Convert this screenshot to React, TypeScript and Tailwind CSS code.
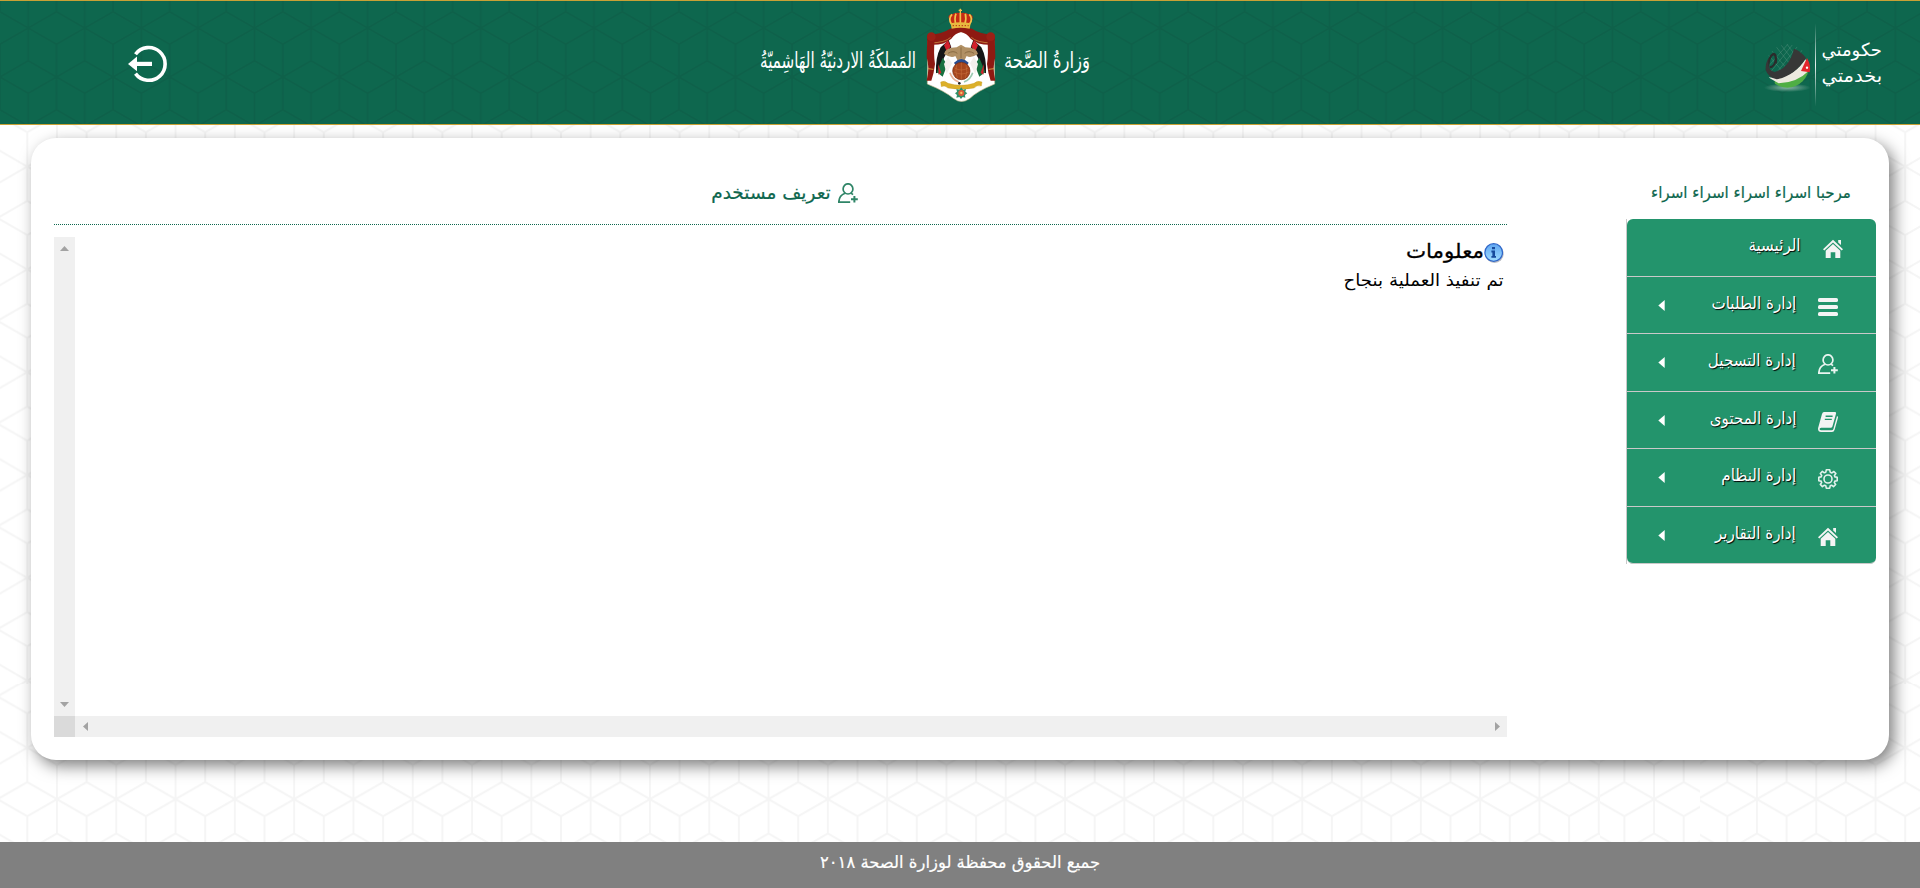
import React from 'react';

const F = "font-['DejaVu_Sans',sans-serif]";

function Hex({ id, w, h, x, y, stroke, sw }: { id: string; w: number; h: number; x: number; y: number; stroke: string; sw: number }) {
  const e = h / 3;
  const c = w / 2;
  const d = [
    `M${c} ${h / 2 - e}V${h / 2 + e}`,
    `M0 ${h / 2 - e / 2}L${c} ${h / 2}L${w} ${h / 2 - e / 2}`,
    `M0 ${h / 2 + e / 2}L${c} ${h / 2}L${w} ${h / 2 + e / 2}`,
    `M0 0V${e}M${w} 0V${e}M0 ${h}V${h - e}M${w} ${h}V${h - e}`,
    `M0 0L${c} ${e / 2}L${w} 0M0 ${h}L${c} ${h - e / 2}L${w} ${h}`,
  ].join('');
  return (
    <pattern id={id} width={w} height={h} x={x - c} y={y - h / 2} patternUnits="userSpaceOnUse">
      <path d={d} fill="none" stroke={stroke} strokeWidth={sw} />
    </pattern>
  );
}

function PageTile({ x, y }: { x: number; y: number }) {
  return (
    <svg x={x} y={y} width="1700" height="684" viewBox="0 0 1700 684">
      <rect width="1600" height="684" fill="url(#pageA)" />
      <rect x="1600" width="100" height="684" fill="url(#pageB)" />
    </svg>
  );
}

function PageBackdrop() {
  return (
    <svg className="absolute inset-0 -z-10" width="1920" height="888">
      <defs>
        <Hex id="pageA" w={59.3} h={102.8} x={27.3} y={63.8} stroke="#f5f5f5" sw={2} />
        <Hex id="pageB" w={59.3} h={102.8} x={23.3} y={63.8} stroke="#f5f5f5" sw={2} />
      </defs>
      <PageTile x={0} y={0} />
      <PageTile x={1700} y={0} />
      <PageTile x={0} y={684} />
      <PageTile x={1700} y={684} />
    </svg>
  );
}

function Emblem() {
  return (
    <svg className="h-[102px] w-[82px]" viewBox="0 0 246 306">
      <path d="M24 110L92 84H156L222 110L224 240Q170 262 150 283Q124 302 100 283Q76 262 22 240Z" fill="#fff" stroke="#cdbf94" strokeWidth="2" />
      <path d="M90 74Q123 62 156 74Q178 90 224 92L222 122Q176 126 152 104Q140 88 123 84Q106 88 94 104Q70 126 24 122L22 92Q68 90 90 74Z" fill="#8e1a12" />
      <path d="M92 100Q76 116 30 117M154 100Q170 116 216 117" stroke="#d8a04a" strokeWidth="2" fill="none" />
      <path d="M22 96L44 104Q40 150 45 180Q42 208 34 230L20 230Q30 190 20 160Z" fill="#8e1a12" />
      <path d="M224 96L202 104Q206 150 201 180Q204 208 212 230L226 230Q216 190 226 160Z" fill="#8e1a12" />
      <path d="M24 194L40 196M206 196L222 194" stroke="#d2a046" strokeWidth="3" />
      <circle cx="34" cy="98" r="13" fill="#9c2016" />
      <circle cx="212" cy="98" r="13" fill="#9c2016" />
      <path d="M86 108L62 130Q46 160 48 208L68 200Q62 160 94 130Z" fill="#161616" />
      <path d="M160 108L184 130Q200 160 198 208L178 200Q184 160 152 130Z" fill="#161616" />
      <path d="M84 108L72 124L80 142L92 128ZM162 108L174 124L166 142L154 128Z" fill="#d3202c" />
      <path d="M68 162L50 204L68 218L82 182ZM178 162L196 204L178 218L164 182Z" fill="#17713f" />
      <path d="M84 158L72 180L80 210L96 178ZM162 158L174 180L166 210L150 178Z" fill="#f3f0ec" />
      <path d="M54 180L64 206L56 212ZM192 180L182 206L190 212Z" fill="#d3202c" />
      <path d="M72 150Q76 130 110 130L123 122L136 130Q170 130 174 150Q152 164 140 156L132 172H114L106 156Q94 164 72 150Z" fill="#b19064" />
      <path d="M84 148Q100 138 112 148M162 148Q146 138 134 148M123 130V162" stroke="#8a6c42" strokeWidth="3" fill="none" />
      <path d="M102 176Q124 154 146 176L140 186H108Z" fill="#2a4c8f" />
      <circle cx="124" cy="201" r="26" fill="#a6461d" stroke="#7c2f12" strokeWidth="2" />
      <path d="M104 192Q124 204 144 192M102 204Q124 216 146 204M124 176V226M110 182Q104 202 112 222M138 182Q144 202 136 222" stroke="#cc7440" strokeWidth="1.5" fill="none" />
      <path d="M90 206Q96 226 116 234" stroke="#e8b094" strokeWidth="5" fill="none" />
      <path d="M158 206Q152 226 132 234" stroke="#9ccab2" strokeWidth="5" fill="none" />
      <circle cx="118" cy="238" r="4" fill="#222" />
      <path d="M62 234Q74 228 84 238Q124 250 162 238Q172 228 186 234L184 246Q172 242 162 252Q124 260 84 252Q74 242 64 248Z" fill="#dcb02a" stroke="#c0911c" strokeWidth="1" />
      <path d="M124 250L129 257L138 255L136 263L142 268L135 273L136 281L128 279L123 285L118 279L109 281L111 273L105 268L111 263L109 255L118 257Z" fill="#2f8f68" />
      <circle cx="124" cy="267" r="9" fill="#dc5a38" />
      <circle cx="124" cy="267" r="3.5" fill="#f3c56a" />
      <path d="M88 48Q80 32 98 30Q108 24 120 27Q134 24 144 30Q164 32 156 48L148 66H96Z" fill="#c62a14" />
      <path d="M94 60Q84 44 96 31M108 62Q102 44 108 29M121 62V27M134 62Q140 44 136 29M149 60Q160 44 148 31" stroke="#f1c34b" strokeWidth="5" fill="none" />
      <path d="M92 58Q121 52 152 58L149 74Q121 68 95 74Z" fill="#e8b93f" />
      <path d="M121 14V27M116 19H126" stroke="#f1c34b" strokeWidth="4" />
      <path d="M98 65H146" stroke="#b52c12" strokeWidth="3" strokeDasharray="4 5" />
    </svg>
  );
}

function Calligraphy({ text, width, size }: { text: string; width: number; size: number }) {
  return (
    <svg className="h-[50px] overflow-visible" width={width} height="50" direction="rtl">
      <text x={width} y="30" textAnchor="start" textLength={width} lengthAdjust="spacingAndGlyphs" fill="#fff" fontSize={size} fontFamily="DejaVu Sans, sans-serif">
        {text}
      </text>
    </svg>
  );
}

function GovLogo() {
  return (
    <svg className="h-[90px] w-[60px]" viewBox="0 0 180 270">
      <defs>
        <linearGradient id="rule" x1="0" y1="0" x2="0" y2="1">
          <stop offset="0" stopColor="#fff" stopOpacity="0" />
          <stop offset=".5" stopColor="#fff" stopOpacity=".9" />
          <stop offset="1" stopColor="#fff" stopOpacity="0" />
        </linearGradient>
        <radialGradient id="shade">
          <stop offset="0" stopColor="#a9c7ba" stopOpacity=".8" />
          <stop offset="1" stopColor="#a9c7ba" stopOpacity="0" />
        </radialGradient>
        <clipPath id="ball"><circle cx="82" cy="138" r="65" /></clipPath>
      </defs>
      <ellipse cx="82" cy="203" rx="70" ry="13" fill="url(#shade)" />
      <g clipPath="url(#ball)">
        <path d="M40 70L120 170M56 66L130 160M76 66L136 146M28 84L104 174M24 104L88 178M120 70L40 170M104 66L30 158M86 70L24 140M132 84L60 172" stroke="#5f9a85" strokeWidth="1.2" />
        <path d="M150 144L148 204H44V182Q110 190 150 144Z" fill="#4fae44" />
        <path d="M24 172Q96 180 136 118L152 146Q116 188 56 190Z" fill="#ece9df" />
      </g>
      <path d="M47 130Q50 102 40 102Q24 110 24 150" fill="none" stroke="#2b2b2b" strokeWidth="7" />
      <path d="M47 122Q42 140 30 142" fill="none" stroke="#2b2b2b" strokeWidth="6" />
      <path d="M102 86Q124 94 138 114Q104 168 50 178Q24 172 17 150Q16 128 26 114Q20 152 44 156Q88 144 102 86Z" fill="#373737" />
      <path d="M141 114L123 153L149 157Q154 136 141 114Z" fill="#e3262c" />
      <circle cx="141" cy="143" r="3.5" fill="#fff" />
      <rect x="165" y="10" width="3" height="250" fill="url(#rule)" />
    </svg>
  );
}

function HomeIcon() {
  return (
    <svg className="size-5" viewBox="0 0 20 20" fill="#f4f4f4">
      <path d="M10 .8L20 10.2L18.7 11.6L10 3.6L1.3 11.6L0 10.2ZM15.2 1H18V6L15.2 3.4Z" />
      <path d="M10 5L17.3 11.8V19H12.3V13.2H7.7V19H2.7V11.8Z" />
    </svg>
  );
}
function ListIcon() {
  return (
    <svg className="size-5" viewBox="0 0 20 20" fill="#f4f4f4">
      <rect y="1" width="20" height="4" rx="1.6" />
      <rect y="8" width="20" height="4" rx="1.6" />
      <rect y="15" width="20" height="4" rx="1.6" />
    </svg>
  );
}
function UserPlusIcon({ color }: { color: string }) {
  return (
    <svg className="size-5" viewBox="0 0 20 20" fill="none" stroke={color} strokeWidth="1.7">
      <ellipse cx="10" cy="5.9" rx="4.9" ry="5.1" />
      <path d="M7 10.2Q1 12.4 .8 19.1H12.2M13 10.2Q14.2 10.8 15 11.6" />
      <path d="M16.4 13V19.6M13 16.3H19.8" strokeWidth="2" />
    </svg>
  );
}
function BookIcon() {
  return (
    <svg className="size-5" viewBox="0 0 20 20">
      <path d="M6 0H17Q18.4 .2 18 1.8L14.4 14.6Q14 15.8 12.6 15.8H3.2Q1.4 16 1.6 17.2Q1.8 18.3 3.2 18.3H13.6Q15 18.3 15.4 17L19 4Q20.3 4.4 19.9 6L16.6 17.8Q16 20 14 20H3Q.2 20 0 17Q0 16 .4 15L4 2Q4.6 .2 6 0Z" fill="#f4f4f4" />
      <path d="M7.6 4.2H14.6M6.8 7.4H13.8" stroke="#23946c" strokeWidth="1.4" />
    </svg>
  );
}
function GearIcon() {
  return (
    <svg className="size-5" viewBox="0 0 20 20" fill="none" stroke="#e2f1eb" strokeWidth="1.6" strokeLinejoin="round">
      <path d="M8.3 .8H11.7L12.2 3.2L13.9 3.9L15.9 2.5L17.9 4.6L16.4 6.5L16.9 7.9L19.2 8.3V11.7L16.9 12.1L16.3 13.6L17.7 15.5L15.5 17.6L13.6 16.2L12.2 16.8L11.7 19.2H8.3L7.8 16.8L6.4 16.2L4.4 17.6L2.3 15.4L3.7 13.5L3.1 12.1L.8 11.7V8.3L3.1 7.9L3.7 6.4L2.3 4.5L4.4 2.4L6.3 3.8L7.8 3.2Z" />
      <circle cx="10" cy="10" r="4" />
    </svg>
  );
}
function InfoIcon() {
  return (
    <svg className="size-5" viewBox="0 0 20 20">
      <defs>
        <linearGradient id="info" x1="0" y1="0" x2="0" y2="1">
          <stop offset="0" stopColor="#5fa6f2" />
          <stop offset="1" stopColor="#9fdcff" />
        </linearGradient>
      </defs>
      <ellipse cx="10.5" cy="11" rx="9.2" ry="8.9" fill="#b9bcc4" />
      <circle cx="9.7" cy="9.5" r="8.8" fill="url(#info)" stroke="#2f66c8" strokeWidth="1.2" />
      <path d="M8 4H11V6.2H8ZM7.4 7.6H11V13H12V14.8H7.4V13H8.4V9.4H7.4Z" fill="#174a9c" />
    </svg>
  );
}

const menu = [
  { label: 'الرئيسية', icon: <HomeIcon />, h: 'h-[58px]', pad: 'pr-[33px]', arrow: false },
  { label: 'إدارة الطلبات', icon: <ListIcon />, h: 'h-[57px]', pad: 'pr-[38px]', arrow: true },
  { label: 'إدارة التسجيل', icon: <UserPlusIcon color="#e9f5f0" />, h: 'h-[58px]', pad: 'pr-[38px]', arrow: true },
  { label: 'إدارة المحتوى', icon: <BookIcon />, h: 'h-[57px]', pad: 'pr-[38px]', arrow: true },
  { label: 'إدارة النظام', icon: <GearIcon />, h: 'h-[58px]', pad: 'pr-[38px]', arrow: true },
  { label: 'إدارة التقارير', icon: <HomeIcon />, h: 'h-[57px]', pad: 'pr-[38px]', arrow: true },
];

function Header() {
  return (
    <header className="relative h-[125px] border-y border-[#c9a135] bg-[#0e674e]">
      <svg className="absolute inset-0" width="1920" height="123">
        <defs>
          <Hex id="head" w={56.58} h={98} x={28.2} y={27} stroke="#0e614a" sw={1.8} />
        </defs>
        <rect width="1920" height="123" fill="url(#head)" />
      </svg>
      <div className="relative flex h-full items-start">
        <div className="flex w-[760px] pl-[127px] pt-[44px]">
          <svg className="h-[38px] w-[40px]" viewBox="0 0 40 38" fill="none">
            <path d="M8.5 9.2A16.4 16.4 0 1 1 8.5 28.6" stroke="#fff" strokeWidth="3.6" />
            <path d="M1 18.9L10 11.6V26.2Z" fill="#fff" />
            <path d="M9 18.9H25" stroke="#fff" strokeWidth="4.2" />
          </svg>
        </div>
        <div className="flex items-start pt-[3px]">
          <div className="pt-[34px]"><Calligraphy text="المَملكَةُ الاردنيّةُ الهَاشِميّةُ" width={156} size={22} /></div>
          <div className="ml-1 mr-[2px]"><Emblem /></div>
          <div className="pt-[34px]"><Calligraphy text="وَزارةُ الصَّحة" width={86} size={22} /></div>
        </div>
        <div className="flex flex-1 items-start justify-end pr-[38px] pt-[19px]">
          <GovLogo />
          <div dir="rtl" className="flex w-[62px] flex-col items-start pt-[17px] text-[18px] leading-[26px] text-white">
            <span className="whitespace-nowrap">حكومتي</span>
            <span className="origin-right scale-x-[1.08] whitespace-nowrap">بخدمتي</span>
          </div>
        </div>
      </div>
    </header>
  );
}

export default function App() {
  return (
    <div className={`relative isolate flex h-[888px] w-[1920px] flex-col overflow-hidden bg-white ${F}`}>
      <PageBackdrop />
      <Header />
      <main className="ml-[31px] mt-[13px] flex h-[622px] w-[1858px] rounded-[25px] bg-white pl-[23px] pr-[13px] shadow-[5px_6px_16px_rgba(0,0,0,0.5)]">
        <section className="flex w-[1453px] flex-col">
          <div className="flex h-[86px] items-center justify-center pl-2 pt-[24px]">
            <div dir="rtl" className="flex items-center gap-[7px] text-[#0e674e]">
              <UserPlusIcon color="#2f8567" />
              <span className="whitespace-nowrap pb-px text-[18.5px] leading-7 [-webkit-text-stroke:0.2px_#0e674e]">تعريف مستخدم</span>
            </div>
          </div>
          <div className="h-px bg-[repeating-linear-gradient(90deg,#0e674e_0_1px,#ffffff_1px_2px)]" />
          <div className="mt-3 flex h-[479px]">
            <div className="flex w-[21px] flex-col items-center justify-between bg-[#f0f0f0] py-[9px]">
              <svg className="h-[5px] w-[9px]" viewBox="0 0 9 5" fill="#a3a3a3"><path d="M0 5L4.5 0L9 5Z" /></svg>
              <svg className="h-[5px] w-[9px]" viewBox="0 0 9 5" fill="#a3a3a3"><path d="M0 0L4.5 5L9 0Z" /></svg>
            </div>
            <div dir="rtl" className="flex flex-1 flex-col items-start pr-[3px] pt-1">
              <div className="flex h-6 items-center">
                <InfoIcon />
                <span className="origin-right scale-x-[1.07] whitespace-nowrap pb-[5px] text-[20px] leading-6 text-black [-webkit-text-stroke:0.3px_#000]">معلومات</span>
              </div>
              <span className="mt-[3px] origin-right scale-x-[1.07] whitespace-nowrap text-[17px] leading-6 text-black">تم تنفيذ العملية بنجاح</span>
            </div>
          </div>
          <div className="flex h-[21px] bg-[#f0f0f0]">
            <div className="w-[21px] bg-[#dadada]" />
            <div className="flex flex-1 items-center justify-between pl-[8px] pr-[7px]">
              <svg className="h-[9px] w-[5px]" viewBox="0 0 5 9" fill="#a3a3a3"><path d="M5 0L0 4.5L5 9Z" /></svg>
              <svg className="h-[9px] w-[5px]" viewBox="0 0 5 9" fill="#a3a3a3"><path d="M0 0L5 4.5L0 9Z" /></svg>
            </div>
          </div>
        </section>
        <aside dir="rtl" className="ml-auto flex w-[250px] flex-col">
          <div className="h-[81px] pr-[25px] pt-[43px] text-[#0e674e]">
            <span className="inline-block origin-right scale-x-[.943] whitespace-nowrap text-[16px] leading-6 [-webkit-text-stroke:0.2px_#0e674e]">مرحبا اسراء اسراء اسراء اسراء</span>
          </div>
          <ul className="border-l border-[#c9c9c9] bg-white">
            {menu.map((m, i) => (
              <li key={i} className={`flex items-center border-b border-[#c9c9c9] bg-[#23946c] ${m.h} ${m.pad} ${i === 0 ? 'rounded-t-md' : ''} ${i === 5 ? 'rounded-b-md' : ''}`}>
                <span className="pt-[3px]">{m.icon}</span>
                <span className="mr-[22px] origin-right scale-x-[.89] whitespace-nowrap pb-[3px] text-[17px] text-white [text-shadow:1px_1px_1px_#000]">{m.label}</span>
                {m.arrow && (
                  <svg className="ml-[31px] mr-auto h-[11px] w-[7px]" viewBox="0 0 7 12" fill="#fff"><path d="M7 0V12L0 6Z" /></svg>
                )}
              </li>
            ))}
          </ul>
        </aside>
      </main>
      <footer className="mt-auto flex h-[46px] justify-center bg-[#808080] pt-[8px] text-white">
        <span dir="rtl" className="scale-x-[.966] whitespace-nowrap text-[17px] leading-6 [-webkit-text-stroke:0.2px_#fff]">جميع الحقوق محفظة لوزارة الصحة ٢٠١٨</span>
      </footer>
    </div>
  );
}
